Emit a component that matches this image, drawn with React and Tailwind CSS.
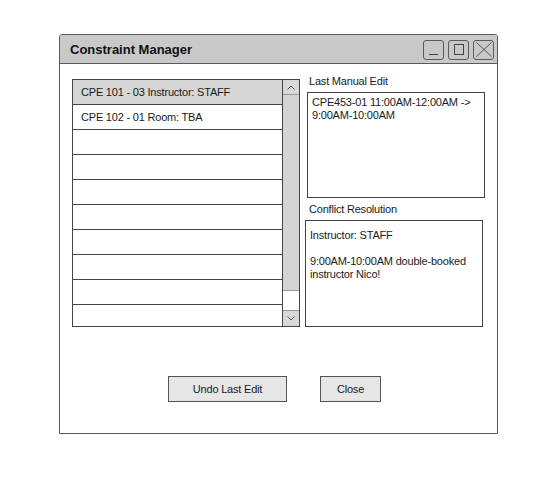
import React from "react";

const font = { fontFamily: '"Liberation Sans", Arial, sans-serif' };

function Chevron({ up }) {
  return (
    <svg width="8" height="5" viewBox="0 0 8 5" className="block">
      <polyline
        points={up ? "0.5,4.5 4,1 7.5,4.5" : "0.5,0.5 4,4 7.5,0.5"}
        fill="none"
        stroke="#555"
        strokeWidth="1"
      />
    </svg>
  );
}

export default function App() {
  const rows = [
    "CPE 101 - 03 Instructor: STAFF",
    "CPE 102 - 01 Room: TBA",
    "",
    "",
    "",
    "",
    "",
    "",
    "",
    "",
  ];
  return (
    <div
      className="w-[540px] h-[480px] bg-white pt-[34px] pl-[59px] text-[#1a1a1a] text-[11px] tracking-[-0.2px]"
      style={font}
    >
      <div className="w-[439px] h-[400px] border border-[#5a5a5a] rounded-t-[3px] flex flex-col bg-white">
        {/* Title bar */}
        <div className="h-[29px] bg-[#c9c9c9] border-b border-[#5a5a5a] rounded-t-[2px] flex items-center pl-[10px] pr-[3px]">
          <div className="text-[13px] font-bold tracking-normal leading-none text-[#111]">
            Constraint Manager
          </div>
          <div className="ml-auto flex gap-[4px] pt-[1px]">
            <div className="w-[21px] h-[20px] border border-[#5a5a5a] rounded-[3px] flex items-end justify-center pb-[4px]">
              <div className="w-[9px] h-[1px] bg-[#444]" />
            </div>
            <div className="w-[21px] h-[20px] border border-[#5a5a5a] rounded-[3px] flex items-center justify-center">
              <div className="w-[10px] h-[11px] border border-[#444]" />
            </div>
            <div className="w-[21px] h-[20px] border border-[#5a5a5a] rounded-[3px] flex items-center justify-center">
              <svg width="16" height="15" viewBox="0 0 16 15">
                <line x1="0.5" y1="0.5" x2="15.5" y2="14.5" stroke="#555" strokeWidth="1" />
                <line x1="15.5" y1="0.5" x2="0.5" y2="14.5" stroke="#555" strokeWidth="1" />
              </svg>
            </div>
          </div>
        </div>

        {/* Body */}
        <div className="flex flex-col">
          <div className="flex items-start">
            {/* List */}
            <div className="mt-[15px] ml-[12px] w-[228px] h-[248px] border border-[#444] flex">
              <div className="flex-1 flex flex-col overflow-hidden border-r border-[#444]">
                {rows.map((r, i) => (
                  <div
                    key={i}
                    className={
                      "shrink-0 flex items-center pl-[8px] " +
                      (i === 0 ? "bg-[#d6d6d6] " : "bg-white ") +
                      (i === rows.length - 1 ? "flex-1" : "h-[25px] border-b border-[#444]")
                    }
                  >
                    {r}
                  </div>
                ))}
              </div>
              {/* Scrollbar */}
              <div className="w-[16px] flex flex-col">
                <div className="h-[15px] bg-[#d8d8d8] border-b border-[#9a9a9a] flex items-center justify-center">
                  <Chevron up />
                </div>
                <div className="h-[196px] bg-[#d4d4d4] border-b border-[#9a9a9a]" />
                <div className="flex-1 bg-white" />
                <div className="h-[16px] bg-[#d8d8d8] border-t border-[#9a9a9a] flex items-center justify-center">
                  <Chevron />
                </div>
              </div>
            </div>

            {/* Right column */}
            <div className="ml-[5px] mt-[10px] flex flex-col">
              <div className="pl-[4px] leading-[14px]">Last Manual Edit</div>
              <div className="mt-[4px] ml-[2px] w-[178px] h-[106px] border border-[#444] pl-[4px] pt-[3px] leading-[13px]">
                CPE453-01 11:00AM-12:00AM -&gt;
                <br />
                9:00AM-10:00AM
              </div>
              <div className="mt-[4px] pl-[4px] leading-[14px]">Conflict Resolution</div>
              <div className="mt-[4px] w-[178px] h-[107px] border border-[#444] pl-[4px] pt-[8px] leading-[13px]">
                Instructor: STAFF
                <br />
                <br />
                9:00AM-10:00AM double-booked
                <br />
                instructor Nico!
              </div>
            </div>
          </div>

          {/* Buttons */}
          <div className="mt-[49px] pl-[108px] flex gap-[33px]">
            <button className="w-[119px] h-[26px] bg-[#e6e6e6] border border-[#555] flex items-center justify-center">
              Undo Last Edit
            </button>
            <button className="w-[61px] h-[26px] bg-[#e6e6e6] border border-[#555] flex items-center justify-center">
              Close
            </button>
          </div>
        </div>
      </div>
    </div>
  );
}
